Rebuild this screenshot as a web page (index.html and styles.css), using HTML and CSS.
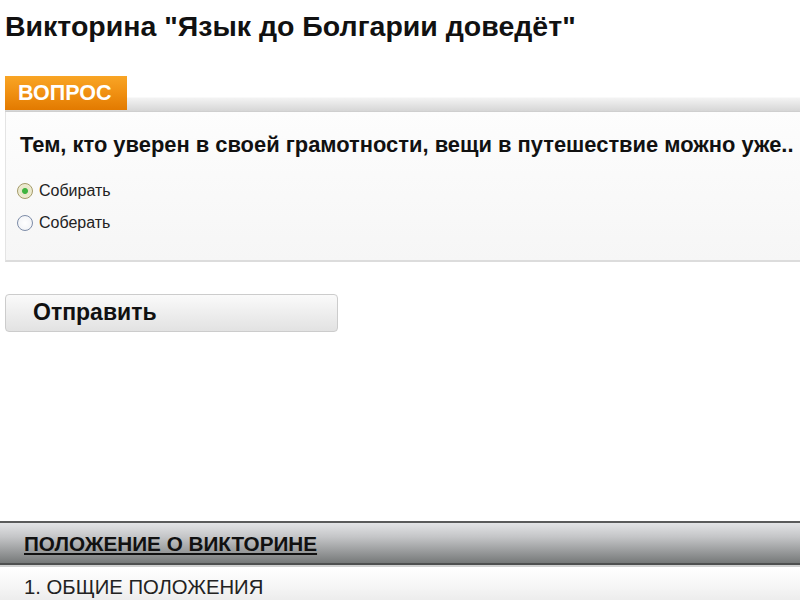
FILE: index.html
```html
<!DOCTYPE html>
<html lang="ru">
<head>
<meta charset="utf-8">
<title>Викторина</title>
<link rel="stylesheet" href="styles.css">
</head>
<body>
<h1 class="title">Викторина "Язык до Болгарии доведёт"</h1>
<div class="question">
  <div class="q-head"><span class="q-tab">ВОПРОС</span></div>
  <div class="q-body">
    <p class="q-text">Тем, кто уверен в своей грамотности, вещи в путешествие можно уже..</p>
    <label class="opt"><span class="radio checked"></span>Собирать</label>
    <label class="opt"><span class="radio"></span>Соберать</label>
  </div>
</div>
<button class="submit" type="button">Отправить</button>
<div class="rules">
  <div class="rules-head"><a href="#" class="rules-link">ПОЛОЖЕНИЕ О ВИКТОРИНЕ</a></div>
  <div class="rules-item">1. ОБЩИЕ ПОЛОЖЕНИЯ</div>
</div>
</body>
</html>
```
FILE: styles.css
```css
html, body {
  margin: 0;
  padding: 0;
  background: #fff;
  font-family: "Liberation Sans", Arial, sans-serif;
  color: #111;
  overflow: hidden;
}
body {
  padding-left: 5px;
}
.title {
  margin: 10px 0 0 0;
  font-size: 28.5px;
  line-height: 32px;
  font-weight: bold;
  color: #111;
}
.question {
  margin-top: 34px;
}
.q-head {
  height: 36px;
  display: flex;
  align-items: flex-start;
  background: linear-gradient(to bottom, #fff 0, #fff 21px, #f3f3f3 22px, #d6d6d6 35px, #c8c8c8 36px);
}
.q-tab {
  height: 34px;
  width: 122px;
  box-sizing: border-box;
  padding-left: 13px;
  display: flex;
  align-items: center;
  background: linear-gradient(to bottom, #f9a525 0, #f09012 50%, #e27a00 100%);
  color: #fff;
  font-size: 21.5px;
  font-weight: bold;
}
.q-body {
  height: 150px;
  box-sizing: border-box;
  border-left: 1px solid #e4e4e4;
  border-bottom: 2px solid #dcdcdc;
  background: linear-gradient(to bottom, #fdfdfd, #f6f6f6);
  padding: 20px 0 0 14px;
}
.q-text {
  margin: 0 0 25px 0;
  font-size: 21.9px;
  line-height: 26px;
  font-weight: bold;
  color: #111;
  white-space: nowrap;
}
.opt {
  display: flex;
  align-items: center;
  gap: 6px;
  height: 16px;
  margin-bottom: 16px;
  font-size: 16px;
  color: #222;
}
.radio {
  width: 16px;
  height: 16px;
  box-sizing: border-box;
  margin-left: -3px;
  border-radius: 50%;
  border: 1.5px solid #7d8ca8;
  background: radial-gradient(circle, #fff 0, #eef0f4 100%);
  flex: none;
}
.radio.checked {
  border-color: #a49a68;
  background: radial-gradient(circle, #3fb33f 0, #3fb33f 2.5px, #e8e6c8 3.5px, #f4f2dc 100%);
}
.submit {
  display: block;
  margin-top: 32px;
  width: 333px;
  height: 38px;
  box-sizing: border-box;
  border: 1px solid #cccccc;
  border-radius: 4px;
  background: linear-gradient(to bottom, #fafafa 0, #eeeeee 50%, #e2e2e2 100%);
  text-align: left;
  padding: 0 0 2px 27px;
  font-family: "Liberation Sans", Arial, sans-serif;
  font-size: 23px;
  font-weight: bold;
  color: #111;
}
.rules {
  margin-top: 189px;
  margin-left: -5px;
}
.rules-head {
  height: 44px;
  box-sizing: border-box;
  border-top: 2px solid #5a5b5b;
  border-bottom: 2px solid #4e5050;
  background: linear-gradient(to bottom, #e3e4e6 0, #c4c5c7 35%, #9a9c9d 70%, #767979 100%);
  padding-left: 24px;
  display: flex;
  align-items: center;
}
.rules-link {
  font-size: 20.7px;
  font-weight: bold;
  color: #111;
  text-decoration: underline;
  text-underline-offset: 2px;
  padding-top: 2px;
}
.rules-item {
  border-top: 2px solid #cfd0d0;
  height: 40px;
  box-sizing: border-box;
  padding: 9px 0 0 24px;
  background: linear-gradient(to bottom, #ffffff 0, #f6f6f6 50%, #e9e9e9 100%);
  font-size: 20.3px;
  color: #222;
}
```
